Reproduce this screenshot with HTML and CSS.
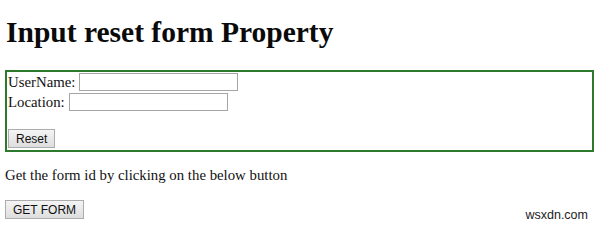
FILE: index.html
```html
<!DOCTYPE html>
<html>
<head>
<meta charset="utf-8">
<title>Input reset form Property</title>
<link rel="stylesheet" href="styles.css">
</head>
<body>
<h1 class="title">Input reset form Property</h1>
<form class="box" id="form1">
  <div class="row"><span class="label">UserName:</span><input class="field" type="text"></div>
  <div class="row"><span class="label">Location:</span><input class="field" type="text"></div>
  <div class="spacer"></div>
  <div class="row btnrow"><input class="btn" type="reset" value="Reset"></div>
</form>
<p class="note">Get the form id by clicking on the below button</p>
<button class="btn getbtn" type="button">GET FORM</button>
<div class="watermark">wsxdn.com</div>
</body>
</html>
```
FILE: styles.css
```css
html, body {
  background: #ffffff;
}
body {
  margin: 0;
  padding: 0 5px;
  font-family: "Liberation Serif", "Times New Roman", serif;
  font-size: 14.8px;
  color: #111;
  position: relative;
  height: 232px;
  overflow: hidden;
}
.title {
  font-size: 29.5px;
  line-height: 33px;
  font-weight: bold;
  margin: 16px 0 21px 1px;
  color: #0a0a0a;
}
.box {
  border: 2px solid #2d7a2d;
  padding: 0 1px 1px 1px;
  width: 583px;
  margin: 0;
}
.row {
  display: flex;
  align-items: center;
  height: 20px;
}
.label {
  margin-right: 4px;
}
.field {
  width: 157px;
  height: 16px;
  border: 1px solid #a5a5a5;
  padding: 0;
  margin: 0;
  background: #fff;
}
.spacer {
  height: 16px;
}
.btnrow {
  height: 21px;
}
.btn {
  font-family: "Liberation Sans", Arial, sans-serif;
  font-size: 12px;
  height: 19px;
  padding: 0 7px;
  margin: 0;
  border: 1px solid #acacac;
  border-radius: 0;
  background: linear-gradient(#f4f4f4, #dedede);
  color: #111;
}
.note {
  margin: 15px 0 16px 0;
  line-height: 17px;
}
.getbtn {
  display: block;
}
.watermark {
  position: absolute;
  right: 12px;
  top: 208px;
  font-family: "Liberation Sans", Arial, sans-serif;
  font-size: 12.5px;
  color: #222;
}
```
